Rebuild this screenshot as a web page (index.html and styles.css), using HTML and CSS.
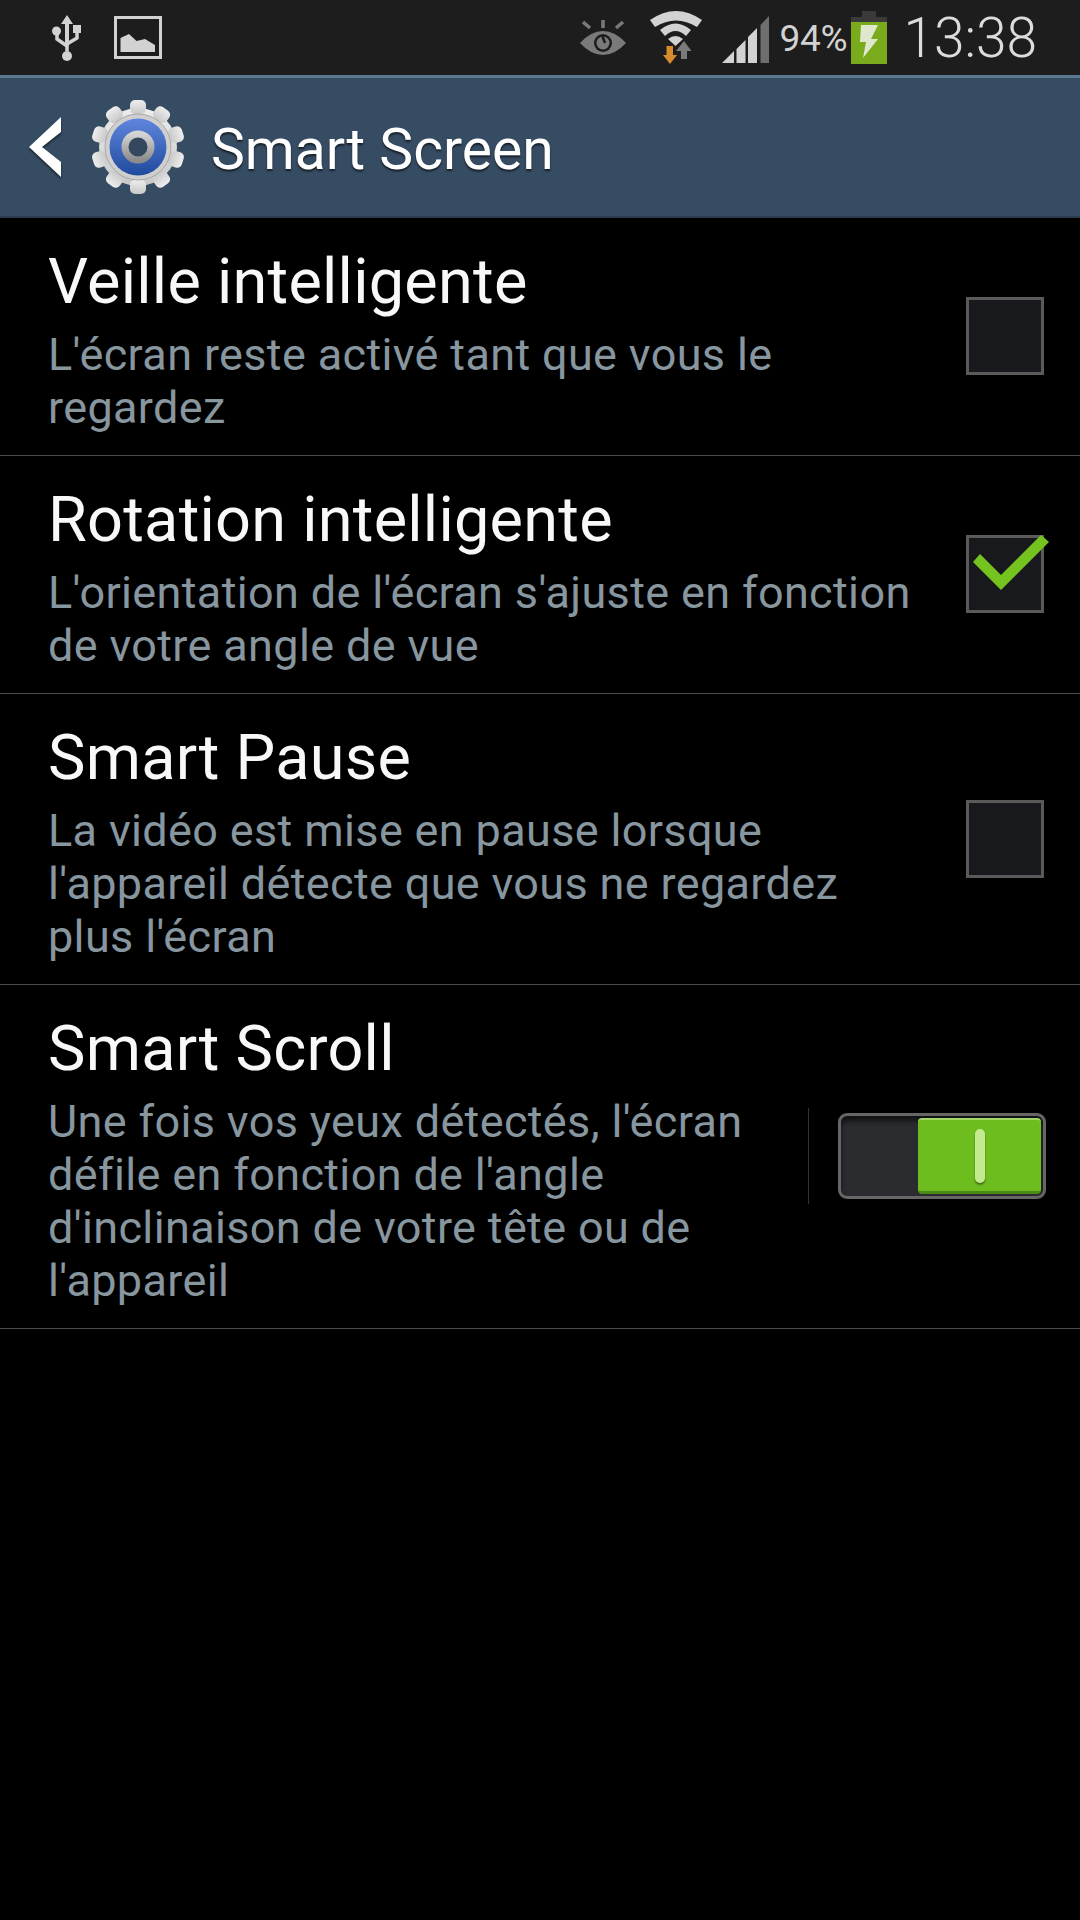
FILE: index.html
```html
<!DOCTYPE html>
<html lang="fr">
<head>
<meta charset="utf-8">
<title>Smart Screen</title>
<link rel="stylesheet" href="styles.css">
</head>
<body>
<div class="status">
  <div class="status-left">
    <svg class="i-usb" width="30" height="46" viewBox="0 0 30 46"><g fill="#d2d2d2"><path d="M15 0l6 9h-4v22h-4V9H9z"/><circle cx="15" cy="41" r="5"/><circle cx="4.500" cy="16" r="4.500"/><rect x="21" y="10" width="8" height="8"/></g><path d="M15 36v-5L5 24v-7M15 29l10-6v-6" fill="none" stroke="#d2d2d2" stroke-width="3.500"/></svg>
    <svg class="i-pic" width="48" height="43" viewBox="0 0 48 43"><rect x="1.500" y="1.500" width="45" height="40" fill="none" stroke="#d2d2d2" stroke-width="3"/><path d="M6.500 36V22l8.500-4 7.500 7 8.500-2 10 6v7z" fill="#d2d2d2"/></svg>
  </div>
  <div class="status-right">
    <svg class="i-eye" width="46" height="36" viewBox="0 0 46 36"><g fill="none" stroke="#7a7a7a" stroke-width="3.500"><path d="M23 0v8M3 2l7 6M43 2l-7 6"/></g><path d="M0 23Q11 11 23 11T46 23Q35 35 23 35T0 23z" fill="#7a7a7a"/><circle cx="23" cy="23" r="9" fill="#1d1d1d"/><circle cx="23" cy="23" r="6.500" fill="#7a7a7a"/><path d="M22 15l3 8" stroke="#1d1d1d" stroke-width="2.500"/></svg>
    <svg class="i-wifi" width="52" height="54" viewBox="0 0 52 54"><g fill="#d2d2d2"><path d="M0 9Q26-9 52 9L47 16Q26 3 5 16z"/><path d="M10 19Q25.500 6 41 19L36 25Q25.500 15 15 25z"/><path d="M18 28Q25.500 22 33 28L25.500 35z"/></g><path d="M34 30L41.500 40H37V48H31V40H26z" fill="#7a7a7a"/><path d="M16.500 35H23V44H27L20 53 13 44H16.500z" fill="#d68c2c"/></svg>
    <svg class="i-signal" width="48" height="47" viewBox="0 0 48 47"><path d="M0 47L12 35V47zM14.500 47V33L23.500 24V47zM26 47V21L35 12V47z" fill="#d2d2d2"/><path d="M38.500 47V9L47 0V47z" fill="#6f6f6f"/></svg>
    <span class="pct">94%</span>
    <svg class="i-batt" width="36" height="53" viewBox="0 0 36 53"><path d="M11 0h14v6H11zM0 6h36v5H0z" fill="#3a3a3a"/><rect y="11" width="36" height="42" fill="#7aab1c"/><path d="M10 14h17l-7 14h7L12 47l3-16H9z" fill="#dfe8cc"/></svg>
    <span class="time">13:38</span>
  </div>
</div>
<header class="bar">
  <svg class="i-back" width="32" height="60" viewBox="0 0 32 60"><path d="M32 0v15L13 30l19 15v15L0 30z" fill="#fff"/></svg>
  <svg class="i-gear" width="94" height="94" viewBox="0 0 94 94">
    <defs>
      <linearGradient id="gearFill" x1="0" y1="0" x2="0" y2="1"><stop offset="0" stop-color="#eeeeee"/><stop offset="1" stop-color="#c8c8c8"/></linearGradient>
      <linearGradient id="blue" x1="0" y1="0" x2="0" y2="1"><stop offset="0" stop-color="#5f86dc"/><stop offset="1" stop-color="#204a9e"/></linearGradient>
      <linearGradient id="ring" x1="0" y1="0" x2="0" y2="1"><stop offset="0" stop-color="#d4d4d4"/><stop offset="1" stop-color="#8c8c8c"/></linearGradient>
    </defs>
    <g fill="url(#gearFill)">
      <circle cx="47" cy="47" r="39"/>
      <rect x="39" y="0" width="16" height="14" rx="5"/><rect x="39" y="80" width="16" height="14" rx="5"/>
      <rect x="39" y="0" width="16" height="14" rx="5" transform="rotate(36 47 47)"/>
      <rect x="39" y="0" width="16" height="14" rx="5" transform="rotate(72 47 47)"/>
      <rect x="39" y="0" width="16" height="14" rx="5" transform="rotate(108 47 47)"/>
      <rect x="39" y="0" width="16" height="14" rx="5" transform="rotate(144 47 47)"/>
      <rect x="39" y="0" width="16" height="14" rx="5" transform="rotate(216 47 47)"/>
      <rect x="39" y="0" width="16" height="14" rx="5" transform="rotate(252 47 47)"/>
      <rect x="39" y="0" width="16" height="14" rx="5" transform="rotate(288 47 47)"/>
      <rect x="39" y="0" width="16" height="14" rx="5" transform="rotate(324 47 47)"/>
    </g>
    <circle cx="47" cy="47" r="33" fill="#cfcfcf" stroke="#a8a8a8" stroke-width="1"/>
    <circle cx="47" cy="47" r="28.500" fill="url(#blue)"/>
    <circle cx="47" cy="47" r="13" fill="#35475c" stroke="url(#ring)" stroke-width="7"/>
  </svg>
  <h1 class="bar-title">Smart Screen</h1>
</header>
<main class="list">
  <section class="row">
    <div class="text">
      <div class="name">Veille intelligente</div>
      <div class="desc">L'écran reste activé tant que vous le regardez</div>
    </div>
    <div class="check"></div>
  </section>
  <section class="row">
    <div class="text">
      <div class="name">Rotation intelligente</div>
      <div class="desc">L'orientation de l'écran s'ajuste en fonction de votre angle de vue</div>
    </div>
    <div class="check">
      <svg class="tick" width="76" height="56" viewBox="0 0 76 56"><path d="M0 27L7 19 28 40 68 0 76 7 28 55z" fill="#74c31f"/></svg>
    </div>
  </section>
  <section class="row">
    <div class="text">
      <div class="name">Smart Pause</div>
      <div class="desc">La vidéo est mise en pause lorsque l'appareil détecte que vous ne regardez plus l'écran</div>
    </div>
    <div class="check"></div>
  </section>
  <section class="row row-switch">
    <div class="text text-narrow">
      <div class="name">Smart Scroll</div>
      <div class="desc">Une fois vos yeux détectés, l'écran défile en fonction de l'angle d'inclinaison de votre tête ou de l'appareil</div>
    </div>
    <div class="vline"></div>
    <div class="switch"><div class="knob"><span class="grip"></span></div></div>
  </section>
</main>
</body>
</html>
```
FILE: styles.css
```css
* { box-sizing: border-box; }
html, body { margin: 0; padding: 0; }
body {
  width: 1080px;
  height: 1920px;
  background: #000;
  color: #fff;
  font-family: Roboto, "Noto Sans", sans-serif;
  overflow: hidden;
}
.status {
  height: 75px;
  background: #1d1d1d;
  display: flex;
  justify-content: space-between;
  align-items: center;
  padding: 0 43px 0 52px;
}
.status-left, .status-right { display: flex; align-items: center; height: 100%; }
.status svg { display: block; flex: none; }
.i-usb { margin: 0 32px 0 0; }
.i-eye { margin: 0 24px 0 0; }
.i-wifi { margin: 0 20px 0 0; }
.i-signal { margin: 4px 9px 0 0; }
.pct { font-size: 37px; color: #d2d2d2; width: 72px; letter-spacing: -.3px; margin-top: 2px; }
.i-batt { margin: 0 16px 0 0; }
.time { font-size: 55px; font-weight: 300; color: #dcdcdc; }
.bar {
  height: 143px;
  background: #364c63;
  border-top: 3px solid #5c7890;
  border-bottom: 2px solid #2a3d50;
  display: flex;
  align-items: center;
  padding-left: 29px;
}
.bar svg { display: block; flex: none; }
.i-back { margin-right: 30px; filter: drop-shadow(0 2px 1px rgba(0,0,0,.5)); }
.i-gear { margin-right: 26px; }
.bar-title {
  margin: 5px 0 0;
  font-size: 57px;
  font-weight: 400;
  text-shadow: 0 2px 2px rgba(0,0,0,.6);
}
.row {
  display: flex;
  align-items: center;
  border-bottom: 1px solid #4d4d4d;
  padding: 19px 36px 22px 48px;
}
.text { flex: 1; min-width: 0; padding-right: 33px; }
.text-narrow { flex: none; width: 760px; padding-right: 0; }
.name { font-size: 63px; line-height: 90px; letter-spacing: .25px; color: #f8f8f8; }
.desc { font-size: 45px; line-height: 53px; letter-spacing: .35px; color: #87969f; padding-top: 1px; margin-bottom: -1px; }
.check {
  position: relative;
  flex: none;
  width: 78px;
  height: 78px;
  margin-top: 2px;
  background: #17191c;
  border: 3px solid #5a5a5a;
}
.tick { position: absolute; left: 4px; top: -3px; }
.vline { flex: none; width: 1px; height: 96px; background: #333; margin-top: 2px; }
.switch {
  flex: none;
  width: 208px;
  height: 86px;
  margin: 2px 0 0 29px;
  border: 3px solid #666;
  border-radius: 9px;
  background: #2a2c30;
  box-shadow: inset 0 5px 5px rgba(0,0,0,.6);
  display: flex;
  justify-content: flex-end;
  padding: 2px;
}
.knob {
  width: 123px;
  background: #6dbd1f;
  border-top: 2px solid #a4d968;
  border-bottom: 3px solid #4b8a14;
  border-radius: 4px;
  display: flex;
  align-items: center;
  justify-content: center;
}
.grip {
  width: 10px;
  height: 54px;
  border-radius: 5px;
  background: #c3ea8f;
  box-shadow: 0 2px 2px rgba(0,0,0,.4);
}
```
